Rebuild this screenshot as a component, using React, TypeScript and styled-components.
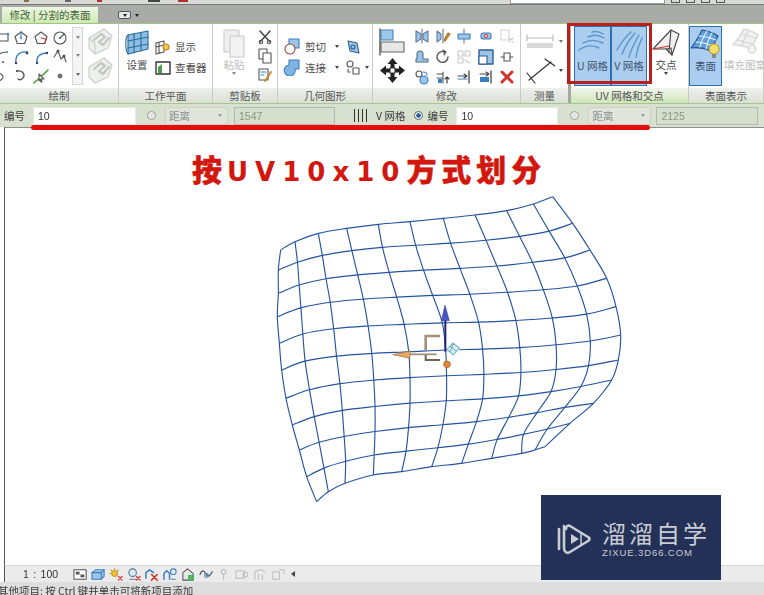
import React from "react";
import styled, { createGlobalStyle } from "styled-components";

const FONT = `"Noto Sans CJK SC", "Noto Sans", sans-serif`;

const Global = createGlobalStyle`
  html, body { margin: 0; padding: 0; background: #fff; }
  body { font-family: ${FONT}; }
`;

const Page = styled.div`
  position: relative;
  width: 764px;
  height: 595px;
  overflow: hidden;
  display: flex;
  flex-direction: column;
  filter: blur(0.35px);
`;

/* ---------- title strip + tabs ---------- */
const TopStrip = styled.div`
  height: 4px;
  background: #d9d9d6;
  border-bottom: 1px solid #777;
  display: flex;
  align-items: flex-start;
  gap: 6px;
  padding-right: 39px;
`;
const TopTick = styled.div<{ $c: string; $ml: number; $w: number }>`
  width: ${(p) => p.$w}px;
  height: 2px;
  margin-left: ${(p) => p.$ml}px;
  background: ${(p) => p.$c};
`;
const SearchBox = styled.div`
  width: 153px;
  height: 3px;
  margin-left: auto;
  background: #fff;
  border: 1px solid #999;
  border-top: 0;
`;
const TopMark = styled.div`
  width: 9px;
  height: 3px;
  border: 1px solid #555;
  border-top: 0;
  box-sizing: border-box;
`;
const TabBar = styled.div`
  height: 18px;
  background: #a9aba6;
  border-bottom: 1px solid #a3c488;
  display: flex;
  align-items: flex-end;
  padding-left: 2px;
`;
const ActiveTab = styled.div`
  width: 96px;
  height: 16px;
  background: linear-gradient(#eef8e4, #cdeab2);
  color: #47603a;
  font-size: 10.5px;
  line-height: 16px;
  text-align: center;
  white-space: nowrap;
`;
const TabToggle = styled.div`
  width: 13px;
  height: 8px;
  margin: 0 0 4px 20px;
  background: #e8e8e8;
  border: 1px solid #555;
  border-radius: 2px;
  box-sizing: border-box;
  display: flex;
  align-items: center;
  justify-content: center;
`;
const Caret = styled.span<{ $c?: string; $ml?: number }>`
  display: inline-block;
  flex: none;
  width: 0;
  height: 0;
  margin-left: ${(p) => p.$ml ?? 0}px;
  border-left: 2px solid transparent;
  border-right: 2px solid transparent;
  border-top: 3px solid ${(p) => p.$c ?? "#444"};
`;
const TabCaret = styled(Caret)`
  margin: 0 0 6px 4px;
`;
const LeftCaret = styled.span`
  flex: none;
  width: 0;
  height: 0;
  margin-left: 2px;
  border-top: 3px solid transparent;
  border-bottom: 3px solid transparent;
  border-right: 4px solid #444;
`;

/* ---------- ribbon ---------- */
const Ribbon = styled.div`
  height: 79px;
  display: flex;
  background: #fff;
`;
const Panel = styled.section<{ $w: number; $gap?: boolean }>`
  width: ${(p) => p.$w}px;
  flex: none;
  display: flex;
  flex-direction: column;
  box-sizing: border-box;
  border-right: ${(p) => (p.$gap ? "3px solid #a5a7a3" : "1px solid #c8ccc4")};
`;
const PanelBody = styled.div<{ $end?: boolean }>`
  height: 64px;
  display: flex;
  overflow: hidden;
  justify-content: ${(p) => (p.$end ? "flex-end" : "flex-start")};
`;
const PanelTitle = styled.div<{ $active?: boolean }>`
  height: 15px;
  line-height: 15px;
  font-size: 10.5px;
  text-align: center;
  color: #555;
  white-space: nowrap;
  overflow: hidden;
  background: ${(p) =>
    p.$active
      ? "linear-gradient(#f0f6e9, #cfe5bb)"
      : "linear-gradient(#eef0ec, #dbe0d6)"};
`;
const IconSvg = styled.svg`
  display: block;
  flex: none;
`;
const IconGrid = styled.div<{ $cols: number; $w: number; $h: number; $pt: number }>`
  flex: none;
  display: grid;
  grid-template-columns: repeat(${(p) => p.$cols}, ${(p) => p.$w}px);
  grid-auto-rows: ${(p) => p.$h}px;
  align-items: center;
  justify-items: center;
  padding-top: ${(p) => p.$pt}px;
`;
const ScrollCol = styled.div`
  flex: none;
  width: 11px;
  height: 58px;
  margin: 3px 0 0 2px;
  border: 1px solid #d8d8d8;
  box-sizing: border-box;
  display: flex;
  flex-direction: column;
  align-items: center;
  justify-content: space-around;
  background: #f4f4f4;
`;
const StackCol = styled.div<{ $w: number }>`
  flex: none;
  width: ${(p) => p.$w}px;
  display: flex;
  flex-direction: column;
  align-items: center;
  justify-content: space-around;
  padding: 3px 0;
  box-sizing: border-box;
`;
const BigButton = styled.div<{ $w: number; $active?: boolean; $muted?: boolean; $ml?: number }>`
  width: ${(p) => p.$w}px;
  margin-left: ${(p) => p.$ml ?? 0}px;
  height: 60px;
  margin-top: 2px;
  flex: none;
  box-sizing: border-box;
  display: flex;
  flex-direction: column;
  align-items: center;
  padding-top: 1px;
  font-size: 10.5px;
  line-height: 14px;
  white-space: nowrap;
  color: ${(p) => (p.$muted ? "#bdbdbd" : p.$active ? "#40536b" : "#4a4a4a")};
  background: ${(p) => (p.$active ? "#aacdf0" : "transparent")};
  border: ${(p) => (p.$active ? "1px solid #2e6fb2" : "0")};
`;
const IconSlot = styled.div`
  height: 31px;
  display: flex;
  align-items: center;
  justify-content: center;
`;
const SmallRows = styled.div<{ $w: number; $ml?: number }>`
  flex: none;
  width: ${(p) => p.$w}px;
  margin-left: ${(p) => p.$ml ?? 0}px;
  padding-top: 14px;
  display: flex;
  flex-direction: column;
  gap: 4px;
`;
const SmallRow = styled.div`
  height: 17px;
  display: flex;
  align-items: center;
  gap: 4px;
  font-size: 10.5px;
  color: #4a4a4a;
  white-space: nowrap;
`;

/* ---------- option bar ---------- */
const OptionBar = styled.div`
  height: 24px;
  background: #d8e0d0;
  border-top: 1px solid #a7c68d;
  box-sizing: border-box;
  display: flex;
  align-items: center;
  font-size: 10.5px;
  color: #3b3b3b;
  padding-left: 4px;
  white-space: nowrap;
`;
const OptLabel = styled.span<{ $ml?: number }>`
  margin-left: ${(p) => p.$ml ?? 0}px;
`;
const Field = styled.div<{ $w: number; $ml: number; $off?: boolean }>`
  width: ${(p) => p.$w}px;
  margin-left: ${(p) => p.$ml}px;
  height: 18px;
  box-sizing: border-box;
  padding-left: 4px;
  line-height: 17px;
  font-family: "Liberation Sans", sans-serif;
  font-size: 10.5px;
  color: ${(p) => (p.$off ? "#8b9487" : "#333")};
  background: ${(p) => (p.$off ? "#d5dfcc" : "#fff")};
  border: 1px solid ${(p) => (p.$off ? "#b5b9b1" : "#e6ece0")};
`;
const Select = styled.div<{ $ml: number }>`
  width: 63px;
  height: 18px;
  margin-left: ${(p) => p.$ml}px;
  box-sizing: border-box;
  padding: 0 5px 0 3px;
  display: flex;
  align-items: center;
  justify-content: space-between;
  color: #8d8d8d;
  background: #e0e5dc;
  border: 1px solid #ccd2c6;
`;
const Radio = styled.span<{ $on?: boolean; $ml: number }>`
  width: 9px;
  height: 9px;
  margin-left: ${(p) => p.$ml}px;
  flex: none;
  box-sizing: border-box;
  border-radius: 50%;
  border: 1px solid ${(p) => (p.$on ? "#666" : "#9b9f98")};
  background: ${(p) =>
    p.$on ? "radial-gradient(#2a5da8 0 2px, #fff 2.5px)" : "radial-gradient(#e2e4df 0 2px, #f4f4f2 3px)"};
`;
const Bars = styled.div`
  width: 14px;
  height: 13px;
  margin-left: 19px;
  flex: none;
  background: repeating-linear-gradient(90deg, #333 0 1px, transparent 1px 4px);
`;

/* ---------- canvas ---------- */
const Canvas = styled.main`
  position: relative;
  flex: 1;
  min-height: 0;
  background: #fff;
  border-left: 1px solid #555;
  border-top: 1px solid #8e8e8e;
  margin-left: 4px;
  box-sizing: border-box;
  display: flex;
  flex-direction: column;
  align-items: flex-start;
  padding: 20px 0 0 187px;
`;
const Heading = styled.h1`
  margin: 0;
  font-size: 30px;
  line-height: 40px;
  font-weight: 900;
  color: #d2170f;
  letter-spacing: 5px;
  white-space: nowrap;
  -webkit-text-stroke: 0.4px #d2170f;
`;
const HeadingLatin = styled.span`
  font-family: "DejaVu Sans", sans-serif;
  font-weight: 700;
  letter-spacing: 7px;
  font-size: 26px;
  -webkit-text-stroke: 0;
`;
const MeshSvg = styled.svg`
  position: absolute;
  left: 255px;
  top: 62px;
`;

/* ---------- view + status bars ---------- */
const ViewBar = styled.div`
  height: 17px;
  margin-left: 4px;
  background: #ebebeb;
  border-left: 1px solid #555;
  border-top: 1px solid #d5d5d5;
  box-sizing: border-box;
  display: flex;
  align-items: center;
  gap: 3px;
  padding-left: 18px;
`;
const Scale = styled.span`
  width: 47px;
  flex: none;
  font-family: "Liberation Sans", sans-serif;
  font-size: 10.5px;
  word-spacing: 1.5px;
  color: #333;
  white-space: pre;
`;
const StatusBar = styled.div`
  height: 13px;
  background: #dedede;
  font-size: 10.5px;
  line-height: 17px;
  color: #3a3a3a;
  white-space: nowrap;
  overflow: hidden;
  margin-left: -2px;
`;

/* ---------- annotations on top ---------- */
const RedBox = styled.div`
  position: absolute;
  left: 567px;
  top: 23px;
  width: 85px;
  height: 61px;
  box-sizing: border-box;
  border: 3px solid #b8201c;
`;
const RedLine = styled.div`
  position: absolute;
  left: 31px;
  top: 125px;
  width: 619px;
  height: 5px;
  border-radius: 3px;
  background: #e60d0d;
`;
const Watermark = styled.aside`
  position: absolute;
  left: 541px;
  top: 495px;
  width: 180px;
  height: 85px;
  background: #233158;
  display: flex;
  align-items: center;
  padding: 2px 0 0 15px;
  box-sizing: border-box;
  gap: 10px;
  color: #c9ccd3;
`;
const MarkText = styled.div`
  display: flex;
  flex-direction: column;
`;
const MarkName = styled.div`
  font-size: 24px;
  line-height: 29px;
  letter-spacing: 3px;
  font-weight: 400;
  white-space: nowrap;
`;
const MarkUrl = styled.div`
  font-family: "Liberation Sans", sans-serif;
  font-size: 9.5px;
  line-height: 12px;
  letter-spacing: 0.9px;
  white-space: nowrap;
`;

/* ---------- icons ---------- */
const Ico = ({ s = 16, w, h, vb = "0 0 16 16", children }: { s?: number; w?: number; h?: number; vb?: string; children?: React.ReactNode }) => (
  <IconSvg width={w ?? s} height={h ?? s} viewBox={vb} fill="none" stroke="#555" strokeWidth={1.1} strokeLinecap="round" strokeLinejoin="round">
    {children}
  </IconSvg>
);

const BLUE = "#3c7fbf";
const LB = "#9cc4e6";
const RED = "#d0342c";

const drawIcons: React.ReactNode[] = [
  <Ico><rect x="-6" y="4" width="20" height="7" fill="#fff" /><circle cx="14" cy="4" r="1.2" fill={BLUE} stroke="none" /></Ico>,
  <Ico><path d="M8 2l6 4.5-2.3 7H4.3L2 6.5z" /><circle cx="8" cy="8" r="1" fill={BLUE} stroke="none" /><path d="M8 1.5v6" stroke={BLUE} /></Ico>,
  <Ico><path d="M8 2l6 4.5-2.3 7H4.3L2 6.5z" /><path d="M8 8l5 1-1 4" stroke={RED} /></Ico>,
  <Ico><circle cx="8" cy="8" r="6" /><circle cx="8" cy="8" r="1" fill={BLUE} stroke="none" /><path d="M8 8l4-4" /></Ico>,
  <Ico><path d="M-2 14C0 8 6 3 12 3" /><circle cx="13" cy="3" r="1" fill={BLUE} stroke="none" /><circle cx="9" cy="13" r="0.9" fill="#444" stroke="none" /></Ico>,
  <Ico><path d="M3 14C2 7 6 2 14 3" stroke={BLUE} strokeWidth="1.4" /><circle cx="14" cy="4" r="1.4" fill="#345" stroke="none" /><circle cx="3" cy="14" r="1.2" fill="#345" stroke="none" /></Ico>,
  <Ico><path d="M4 14C3 8 7 4 14 4" stroke={BLUE} strokeWidth="1.4" /><circle cx="14" cy="4" r="1.2" fill="#345" stroke="none" /><circle cx="4" cy="14" r="1.2" fill="#345" stroke="none" /></Ico>,
  <Ico><path d="M2 8l4-6 3 8 3-3 2 6" /><circle cx="6" cy="2" r="1" fill="#345" /><circle cx="12" cy="7" r="1" fill="#345" /></Ico>,
  <Ico><ellipse cx="3" cy="9" rx="6" ry="4" /><circle cx="3" cy="9" r="1.5" fill="#444" stroke="none" /></Ico>,
  <Ico><path d="M4 3c7-1 8 5 6 7s-4 2-5 1" strokeWidth="1.3" /><circle cx="4" cy="3" r="1" fill="#345" stroke="none" /></Ico>,
  <Ico><path d="M1 15L15 2" stroke="#4fa53a" strokeWidth="1.6" strokeDasharray="3 1" /><path d="M6 6l5 5-3 0 1 3-1 0-1-3-1 2z" fill="#fff" /></Ico>,
  <Ico><circle cx="8" cy="8" r="2.5" fill="#777" stroke="none" /></Ico>,
];

const GrayShape = ({ inner }: { inner?: boolean }) => (
  <Ico s={27} vb="0 0 27 27">
    <path d="M2 10L17 1l8 7-4 12-13 6-6-6z" fill="#eef0ee" stroke="#c9cdc9" />
    <path d="M7 12l7-6 4 3-6 5 4 3 6-7" stroke="#c3c7c3" strokeWidth="2.2" />
    {inner ? null : <path d="M2 10l6 6v10" stroke="#c9cdc9" />}
  </Ico>
);

const modifyIcons: React.ReactNode[] = [
  <Ico><path d="M2 3l5 3v5l-5 3zM14 3l-5 3v5l5 3z" stroke="#5b7da0" fill={LB} /><path d="M8 1v14" stroke="#777" /></Ico>,
  <Ico><path d="M2 3l4 3v5l-4 3z" stroke="#5b7da0" fill={LB} /><path d="M8 1v14" stroke="#777" /><path d="M10 13l5-7-2-1-4 7z" fill="#e0a03a" stroke="#a56a1d" /></Ico>,
  <Ico><path d="M8 1v14" stroke="#777" /><rect x="2" y="6" width="12" height="5" fill={LB} stroke={BLUE} /></Ico>,
  <Ico><rect x="3" y="5" width="10" height="6" rx="2" fill={LB} stroke={BLUE} /><circle cx="8" cy="8" r="1.5" fill="#fff" stroke={RED} /></Ico>,
  <Ico><rect x="2" y="2" width="8" height="10" stroke="#cfd2cf" /><path d="M10 10l4 4M14 10l-4 4" stroke="#c6c9c6" /></Ico>,
  <Ico><path d="M2 13h12v-3H9V5a3 3 0 0 0-6 0v5H2z" fill={LB} stroke="#55708c" /></Ico>,
  <Ico><path d="M13 8a5.5 5.5 0 1 1-3-5" strokeWidth="1.4" /><path d="M8 1l3 2-2 3" fill="#555" /></Ico>,
  <Ico><rect x="2" y="2" width="5" height="5" stroke="#c8c8c8" /><rect x="9" y="2" width="5" height="5" stroke="#c8c8c8" /><rect x="2" y="9" width="5" height="5" stroke="#c8c8c8" /><path d="M9 11l5 3" stroke="#c8c8c8" /></Ico>,
  <Ico><rect x="1" y="1" width="14" height="14" stroke="#2c5e94" strokeWidth="1.4" fill={LB} /><rect x="1" y="7" width="8" height="8" fill="#fff" stroke="#2c5e94" /></Ico>,
  <Ico><path d="M2 8h3M11 8h3" /><rect x="5" y="4" width="6" height="8" /></Ico>,
  <Ico><circle cx="5" cy="5" r="3" fill="#fff" stroke="#555" /><circle cx="10" cy="11" r="4" fill={LB} stroke={BLUE} /><path d="M9 3c3 0 4 1 4 3" stroke={BLUE} /></Ico>,
  <Ico><path d="M2 5h6M2 9h6M8 3v11" /><path d="M12 14V8M10 10l2-2 2 2" stroke="#333" /><rect x="3" y="10" width="4" height="4" fill={BLUE} stroke="none" /></Ico>,
  <Ico><path d="M13 2v12" strokeWidth="1.4" /><path d="M2 7h9M8 5l3 2-3 2" stroke="#444" /><path d="M2 10h9" stroke={BLUE} /></Ico>,
  <Ico><path d="M13 2v12" strokeWidth="1.4" /><path d="M2 5h9M8 3l3 2-3 2" stroke="#444" /><rect x="2" y="8" width="9" height="5" fill={BLUE} stroke="none" /></Ico>,
  <Ico><path d="M3 3l10 10M13 3L3 13" stroke={RED} strokeWidth="3" /></Ico>,
];

const viewIcons: React.ReactNode[] = [
  <Ico s={15}><rect x="1" y="3" width="13" height="10" fill="#fff" /><rect x="3" y="5" width="4" height="3" fill="#555" stroke="none" /><rect x="8" y="8" width="4" height="3" fill="#555" stroke="none" /></Ico>,
  <Ico s={15}><path d="M1 6l4-3h9v7l-3 3H1z" fill={LB} stroke={BLUE} /><path d="M1 6h10v7M11 6l3-3" stroke={BLUE} /></Ico>,
  <Ico s={15}><circle cx="6" cy="7" r="3" fill="#f2c431" stroke="#c9962a" /><path d="M6 1v2M1 7h2M2 3l2 2M10 3L8 5" stroke="#c9962a" /><path d="M10 10l4 4M14 10l-4 4" stroke={RED} strokeWidth="1.4" /></Ico>,
  <Ico s={15}><circle cx="6" cy="6" r="4" fill="#dce9f4" stroke="#51729c" /><path d="M3 13h8" stroke="#777" /><path d="M10 10l4 4M14 10l-4 4" stroke={RED} strokeWidth="1.4" /></Ico>,
  <Ico s={15}><path d="M1 12V6l4-3 4 3" stroke={BLUE} strokeWidth="1.6" /><path d="M7 8l6 6M13 8l-6 6" stroke={RED} strokeWidth="1.6" /></Ico>,
  <Ico s={15}><path d="M1 13V7l3-3 3 3v6" stroke={BLUE} strokeWidth="1.6" /><circle cx="11" cy="5" r="3" stroke={BLUE} /><path d="M9 13h4" stroke={BLUE} /></Ico>,
  <Ico s={15}><path d="M2 14V6l5-4 6 5v7z" fill="#e8e8e8" stroke="#555" /><rect x="8" y="9" width="5" height="5" fill="#6cae5f" stroke="#3b6" /></Ico>,
  <Ico s={15}><path d="M1 8c2-5 4-5 6-1s4 4 7-2" strokeWidth="1.3" /><circle cx="8" cy="9" r="2" stroke={BLUE} /></Ico>,
  <Ico s={15}><circle cx="7" cy="5" r="2.4" stroke="#bbb" /><path d="M7 8v5" stroke="#bbb" /></Ico>,
  <Ico s={15}><rect x="1" y="4" width="9" height="8" stroke="#bdbdbd" /><circle cx="11" cy="8" r="2.5" stroke="#bdbdbd" /></Ico>,
  <Ico s={15}><path d="M2 13V5l6-2 5 2M6 13V8M10 13V8" stroke="#bdbdbd" /></Ico>,
  <Ico s={15}><rect x="2" y="5" width="7" height="8" stroke="#bdbdbd" /><path d="M9 3h5v4" stroke="#bdbdbd" /></Ico>,
];

/* ---------- mesh data, traced from the picture (viewBox 1110x960) ---------- */
const traced: number[][][] = [
  [[62,180],[105,155],[175,130],[260,115],[355,103],[450,95],[550,85],[645,75],[740,62],[820,42],[878,20]],
  [[55,240],[110,215],[185,195],[275,180],[365,170],[465,165],[570,160],[680,150],[780,140],[870,125],[938,100]],
  [[55,310],[115,285],[195,265],[295,255],[385,248],[490,240],[600,235],[710,230],[820,215],[920,205],[990,180]],
  [[52,380],[120,350],[210,335],[310,325],[410,320],[515,315],[630,312],[745,305],[850,300],[955,290],[1040,265]],
  [[58,460],[125,430],[220,415],[325,408],[430,403],[555,398],[655,398],[770,392],[880,385],[985,375],[1068,350]],
  [[65,540],[130,510],[228,498],[335,490],[450,487],[555,480],[670,478],[780,475],[890,465],[995,455],[1082,435]],
  [[78,625],[145,600],[240,580],[340,570],[450,562],[560,558],[672,553],[785,548],[890,540],[990,530],[1075,510]],
  [[97,705],[160,680],[245,660],[345,650],[450,640],[560,632],[670,628],[780,620],[880,605],[965,590],[1055,570]],
  [[118,780],[175,755],[250,740],[345,725],[445,712],[550,705],[650,695],[750,680],[830,668],[915,650],[1000,640]],
  [[140,860],[190,835],[255,815],[340,795],[440,785],[535,775],[625,765],[710,750],[785,735],[860,718],[930,700]],
  [[170,935],[205,905],[255,880],[340,855],[425,845],[515,830],[605,820],[695,805],[785,790],[825,780],[855,770]],
];

// the tracing is by eye, so ease the interior points towards their neighbours
const rows = traced.map((row, r) =>
  row.map((pt, c) => {
    if (r === 0 || r === 10 || c === 0 || c === 10) return pt;
    return [0, 1].map(
      (k) => pt[k] * 0.5 + (traced[r - 1][c][k] + traced[r + 1][c][k] + row[c - 1][k] + row[c + 1][k]) * 0.125,
    );
  }),
);

// catmull-rom through the traced points
const smooth = (pts: number[][]) => {
  let d = `M${pts[0][0]} ${pts[0][1]}`;
  for (let i = 0; i < pts.length - 1; i++) {
    const p0 = pts[i - 1] ?? pts[i];
    const p1 = pts[i];
    const p2 = pts[i + 1];
    const p3 = pts[i + 2] ?? p2;
    d += ` C${p1[0] + (p2[0] - p0[0]) / 6} ${p1[1] + (p2[1] - p0[1]) / 6} ${p2[0] - (p3[0] - p1[0]) / 6} ${p2[1] - (p3[1] - p1[1]) / 6} ${p2[0]} ${p2[1]}`;
  }
  return d;
};

const Mesh = () => (
  <MeshSvg width={370} height={320} viewBox="0 0 1110 960" fill="none">
    <g stroke="#24539f" strokeWidth={3.4}>
      {rows.map((r, i) => <path key={i} d={smooth(r)} />)}
      {rows[0].map((_, c) => <path key={c} d={smooth(rows.map((r) => r[c]))} />)}
    </g>
    <path d="M561 480l17-22 22 16-20 22z" fill="#d8f2f8" stroke="#cfeef6" strokeWidth="5" />
    <path d="M561 478l17-18 20 14-18 20zM570 469l18 14M580 460l-10 26" stroke="#3d7d95" strokeWidth="2" />
    <path d="M540 438h-43v42" stroke="#a89078" strokeWidth="8" />
    <path d="M497 492v18h43" stroke="#6c6258" strokeWidth="6" />
    <path d="M450 493h80" stroke="#a08a70" strokeWidth="5" />
    <path d="M398 494l52-11v22z" fill="#eaa864" stroke="#7a5020" strokeWidth="1.5" />
    <path d="M556 390v95" stroke="#1c2470" strokeWidth="6" />
    <path d="M555 345l-11 47h24z" fill="#4a55c4" stroke="#2d348f" strokeWidth="1.5" />
    <circle cx="561" cy="523" r="10" fill="#e08a3a" stroke="#a5501e" strokeWidth="2" />
  </MeshSvg>
);

const App = () => (
  <Page>
    <Global />
    <TopStrip>
      <TopTick $c="#8d6b4c" $ml={24} $w={5} />
      <TopTick $c="#666" $ml={30} $w={6} />
      <TopTick $c="#a33" $ml={20} $w={5} />
      <TopTick $c="#444" $ml={40} $w={12} />
      <TopTick $c="#b03030" $ml={12} $w={10} />
      <SearchBox />
      <TopMark />
      <TopMark />
      <TopMark />
      <TopMark />
    </TopStrip>
    <TabBar>
      <ActiveTab>修改 | 分割的表面</ActiveTab>
      <TabToggle><Caret $c="#222" /></TabToggle>
      <TabCaret $c="#222" />
    </TabBar>

    <Ribbon>
      <Panel $w={119}>
        <PanelBody $end>
          <IconGrid $cols={4} $w={19.5} $h={19} $pt={4}>
            {drawIcons.map((ic, i) => <React.Fragment key={i}>{ic}</React.Fragment>)}
          </IconGrid>
          <ScrollCol><Caret $c="#888" /><Caret $c="#888" /><Caret $c="#666" /></ScrollCol>
          <StackCol $w={35}><GrayShape /><GrayShape inner /></StackCol>
        </PanelBody>
        <PanelTitle>绘制</PanelTitle>
      </Panel>

      <Panel $w={94}>
        <PanelBody>
          <BigButton $w={36}>
            <IconSlot>
              <Ico s={28} vb="0 0 28 28">
                <path d="M5 6l20-4v18L5 25z" fill="#8dbfe4" stroke="#2c6a9a" />
                <path d="M11 5v19M18 4v18M5 12l20-4M5 19l20-4" stroke="#2c6a9a" />
                <path d="M5 6C2 8 2 20 5 25" stroke="#2c6a9a" />
              </Ico>
            </IconSlot>
            设置
          </BigButton>
          <SmallRows $w={56}>
            <SmallRow>
              <Ico><path d="M1 4l8-2v11l-8 2zM4 3v11M1 8l8-2" /><circle cx="11" cy="8" r="3" fill="#f3c845" stroke="#b98a1f" /></Ico>
              显示
            </SmallRow>
            <SmallRow>
              <Ico><rect x="1" y="2" width="14" height="12" fill="#fff" stroke="#333" strokeWidth="1.4" /><path d="M3 13V7l4-3v9z" fill="#4f9c50" stroke="none" /></Ico>
              查看器
            </SmallRow>
          </SmallRows>
        </PanelBody>
        <PanelTitle>工作平面</PanelTitle>
      </Panel>

      <Panel $w={65}>
        <PanelBody>
          <BigButton $w={42} $muted>
            <IconSlot>
              <Ico s={30} vb="0 0 30 30">
                <rect x="5" y="2" width="15" height="22" rx="1" fill="#efefef" stroke="#cacaca" />
                <rect x="11" y="8" width="14" height="21" fill="#f2f2f2" stroke="#cacaca" />
              </Ico>
            </IconSlot>
            粘贴
            <Caret $c="#888" />
          </BigButton>
          <StackCol $w={20}>
            <Ico><path d="M3 2l10 11M13 2L3 13" stroke="#444" strokeWidth="1.5" /><circle cx="4" cy="13" r="1.8" /><circle cx="12" cy="13" r="1.8" /></Ico>
            <Ico><rect x="2" y="1" width="8" height="10" fill="#fff" /><rect x="6" y="5" width="8" height="10" fill="#fff" /></Ico>
            <Ico><rect x="2" y="2" width="9" height="11" fill="#fff" /><path d="M4 5h5M4 8h3" stroke={BLUE} /><path d="M8 14l6-9" stroke="#c58a31" strokeWidth="2" /></Ico>
          </StackCol>
        </PanelBody>
        <PanelTitle>剪贴板</PanelTitle>
      </Panel>

      <Panel $w={95}>
        <PanelBody>
          <SmallRows $w={62} $ml={5}>
            <SmallRow>
              <Ico w={18} h={17} vb="0 0 18 17"><rect x="6" y="1" width="10" height="9" fill={LB} stroke={BLUE} /><circle cx="7" cy="11" r="5" fill="#fff" stroke="#a5453a" /></Ico>
              剪切
              <Caret $ml={5} />
            </SmallRow>
            <SmallRow>
              <Ico w={18} h={17} vb="0 0 18 17"><path d="M6 1h10v9h-4a5.5 5.5 0 1 1-6-4z" fill="#7fb4e2" stroke={BLUE} /></Ico>
              连接
              <Caret $ml={5} />
            </SmallRow>
          </SmallRows>
          <SmallRows $w={26}>
            <SmallRow>
              <Ico><path d="M3 2l9 2 2 10-9-2z" fill={LB} stroke="#2c5e94" /><circle cx="8" cy="8" r="2" stroke="#2c5e94" /></Ico>
            </SmallRow>
            <SmallRow>
              <Ico><circle cx="5" cy="4" r="3" /><rect x="8" y="8" width="6" height="6" /><path d="M3 9v3h2" /></Ico>
              <Caret />
            </SmallRow>
          </SmallRows>
        </PanelBody>
        <PanelTitle>几何图形</PanelTitle>
      </Panel>

      <Panel $w={148}>
        <PanelBody>
          <StackCol $w={38}>
            <Ico s={28} vb="0 0 28 28">
              <path d="M2 1v26" stroke="#555" strokeWidth="1.4" />
              <rect x="3" y="2" width="12" height="10" fill="#9cc8ea" stroke="#4a84b8" />
              <rect x="3" y="14" width="23" height="10" fill="#e8e8e8" stroke="#666" />
            </Ico>
            <Ico s={27} vb="0 0 27 27">
              <path d="M13.5 1l5 6h-3v4h-4V7h-3zM13.5 26l5-6h-3v-4h-4v4h-3zM1 13.5l6-5v3h4v4H7v3zM26 13.5l-6-5v3h-4v4h4v3z" fill="#222" stroke="none" />
              <rect x="11" y="11" width="5" height="5" fill="#fff" stroke="#333" />
            </Ico>
          </StackCol>
          <IconGrid $cols={5} $w={21.3} $h={20.5} $pt={2}>
            {modifyIcons.map((ic, i) => <React.Fragment key={i}>{ic}</React.Fragment>)}
          </IconGrid>
        </PanelBody>
        <PanelTitle>修改</PanelTitle>
      </Panel>

      <Panel $w={50} $gap>
        <PanelBody>
          <StackCol $w={46}>
            <SmallRow>
              <Ico w={30} h={17} vb="0 0 30 17"><path d="M2 5h26M2 2v6M28 2v6" stroke="#bbb" /><rect x="2" y="10" width="26" height="5" fill="#d8d8d8" stroke="none" /></Ico>
              <Caret $c="#777" />
            </SmallRow>
            <SmallRow>
              <Ico w={30} h={26} vb="0 0 30 26"><path d="M4 22L26 4M2 15l8 10M20 1l10 7" stroke="#333" strokeWidth="1.2" /></Ico>
              <Caret />
            </SmallRow>
          </StackCol>
        </PanelBody>
        <PanelTitle>测量</PanelTitle>
      </Panel>

      <Panel $w={118}>
        <PanelBody>
          <BigButton $w={37} $ml={3} $active>
            <IconSlot>
              <Ico w={34} h={30} vb="0 0 34 30">
                <g stroke="#5b95ca" strokeWidth="1.4">
                  <path d="M16 3c4-1 8 0 11 2M12 8c6-3 11-2 16 1M7 14c7-4 14-3 20 0M3 21c7-5 14-5 20-2" />
                </g>
              </Ico>
            </IconSlot>
            U 网格
          </BigButton>
          <BigButton $w={36} $active>
            <IconSlot>
              <Ico w={34} h={30} vb="0 0 34 30">
                <g stroke="#5b95ca" strokeWidth="1.4">
                  <path d="M5 21C9 14 13 8 19 3M10 25c3-8 8-15 13-21M17 28c2-8 6-15 10-22M24 28c1-7 3-13 6-19" />
                </g>
              </Ico>
            </IconSlot>
            V 网格
          </BigButton>
          <BigButton $w={38}>
            <IconSlot>
              <Ico s={30} vb="0 0 30 30">
                <path d="M2 21L20 2l8 4-7 21-6-6z" fill="#f0f0f0" stroke="#444" />
                <path d="M20 2l-2 22M15 21l5-1 1 7" stroke="#444" />
                <path d="M2 21l16-3" stroke={RED} strokeWidth="1.2" />
              </Ico>
            </IconSlot>
            交点
            <Caret />
          </BigButton>
        </PanelBody>
        <PanelTitle $active>UV 网格和交点</PanelTitle>
      </Panel>

      <Panel $w={75}>
        <PanelBody>
          <BigButton $w={33} $active>
            <IconSlot>
              <Ico s={31} vb="0 0 31 31">
                <path d="M1 20C6 14 9 8 12 2c6 1 12 3 16 6-3 6-5 10-7 15C14 20 8 19 1 20z" fill="#5e9fdc" stroke="#1f4f8a" />
                <path d="M6 14c6 0 12 2 17 4M9 8c6 0 12 2 17 4M10 19c1-6 4-11 7-16M16 21c1-6 3-11 6-16" stroke="#e8f2fb" />
                <circle cx="24" cy="21" r="5" fill="#f5dc6e" stroke="#c9a21f" />
                <rect x="22" y="26" width="4" height="4" fill="#888" stroke="none" />
              </Ico>
            </IconSlot>
            表面
          </BigButton>
          <BigButton $w={42} $muted $ml={2}>
            <IconSlot>
              <Ico s={31} vb="0 0 31 31">
                <path d="M3 18C8 12 11 7 14 2c6 1 10 3 14 6-3 6-5 10-7 14-6-3-12-4-18-4z" fill="#f0f0f0" stroke="#d0d0d0" />
                <path d="M8 13l14 4M12 7l14 4M12 18l6-14" stroke="#d4d4d4" />
                <circle cx="22" cy="22" r="4" fill="#f2f2f2" stroke="#d0d0d0" />
              </Ico>
            </IconSlot>
            填充图案
          </BigButton>
        </PanelBody>
        <PanelTitle>表面表示</PanelTitle>
      </Panel>
    </Ribbon>

    <OptionBar>
      <OptLabel>编号</OptLabel>
      <Field $w={103} $ml={8}>10</Field>
      <Radio $ml={11} />
      <Select $ml={9}>距离<Caret $c="#999" /></Select>
      <Field $w={101} $ml={6} $off>1547</Field>
      <Bars />
      <OptLabel $ml={8}>V 网格</OptLabel>
      <Radio $on $ml={9} />
      <OptLabel $ml={4}>编号</OptLabel>
      <Field $w={102} $ml={8}>10</Field>
      <Radio $ml={12} />
      <Select $ml={9}>距离<Caret $c="#999" /></Select>
      <Field $w={102} $ml={5} $off>2125</Field>
    </OptionBar>

    <Canvas>
      <Heading>按<HeadingLatin>UV10x10</HeadingLatin>方式划分</Heading>
      <Mesh />
    </Canvas>

    <ViewBar>
      <Scale>1 : 100</Scale>
      {viewIcons.map((ic, i) => <React.Fragment key={i}>{ic}</React.Fragment>)}
      <LeftCaret />
    </ViewBar>
    <StatusBar>其他项目: 按 Ctrl 键并单击可将新项目添加</StatusBar>

    <RedBox />
    <RedLine />
    <Watermark>
      <Ico w={36} h={36} vb="0 0 36 36">
        <path d="M8 5v22c0 4 3 6 6 4l18-11c2-1 2-3 0-4L14 5c-2-1-4 0-4 3" stroke="#c9ccd3" strokeWidth="2.6" />
        <path d="M3 8v20" stroke="#c9ccd3" strokeWidth="2.6" />
        <path d="M15 13v10l8-5z" fill="#c9ccd3" stroke="none" />
        <path d="M25 13v10" stroke="#c9ccd3" strokeWidth="1.5" />
      </Ico>
      <MarkText>
        <MarkName>溜溜自学</MarkName>
        <MarkUrl>ZIXUE.3D66.COM</MarkUrl>
      </MarkText>
    </Watermark>
  </Page>
);

export default App;
